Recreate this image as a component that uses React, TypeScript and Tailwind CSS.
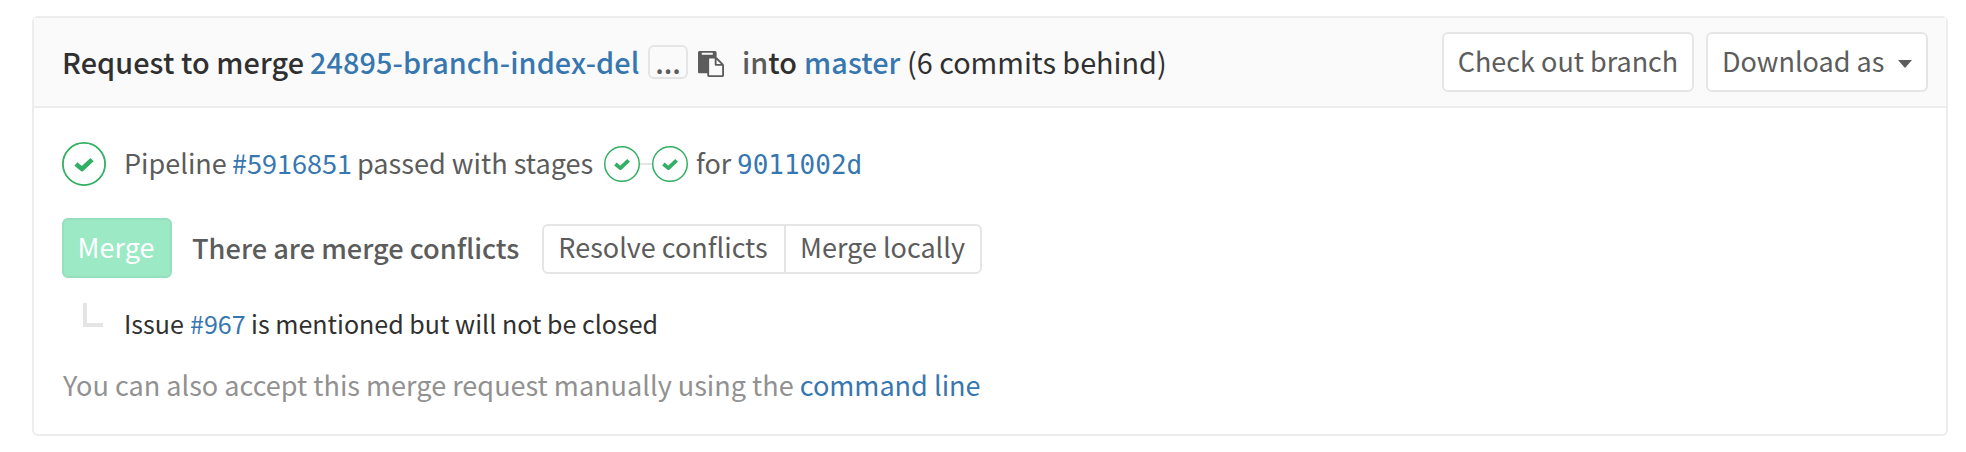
import React from 'react';

function CheckCircle({ className }: { className: string }) {
  return (
    <svg viewBox="0 0 44 44" className={`shrink-0 ${className}`} fill="none" stroke="#31af64">
      <circle cx="22" cy="22" r="21.1" strokeWidth="1.8" />
      <path d="M13.900 22 20 27 30 17.600" strokeWidth="4.600" strokeLinejoin="round" />
    </svg>
  );
}

export default function App() {
  return (
    <div className="h-[452px] w-[1966px] overflow-hidden bg-white pt-4 pl-8 font-['Noto_Sans_CJK_SC',sans-serif] text-[27px] leading-[30px] whitespace-nowrap text-[#5c5c5c]">
      <section className="h-[420px] w-[1916px] rounded-md border-2 border-[#ededed]">
        <header className="flex h-[90px] items-center justify-between border-b-2 border-[#ededed] bg-[#fafafa] pr-[18px] pl-7">
          <div className="flex items-center text-[28.8px] font-medium text-[#303030]">
            <span className="w-[248px] tracking-[0.09px]">Request to merge</span>
            <a className="w-[338px] tracking-[0.09px] text-[#3777b0]">24895-branch-index-del</a>
            <span className="flex h-[34px] w-10 items-center justify-center rounded-md border-2 border-[#e5e5e5] text-[#5c5c5c]">...</span>
            <svg viewBox="0 0 1792 1792" className="mt-1 ml-[10px] h-[26px] w-[26px]" fill="#5c5c5c">
              <path d="M768 1664h896v-640h-416q-40 0-68-28t-28-68v-416h-384v1152zm256-1440v-64q0-13-9.500-22.500t-22.500-9.500h-704q-13 0-22.500 9.500t-9.500 22.500v64q0 13 9.500 22.500t22.500 9.500h704q13 0 22.500-9.500t9.500-22.500zm256 672h299l-299-299v299zm512 128v672q0 40-28 68t-68 28h-960q-40 0-68-28t-28-68v-160h-544q-40 0-68-28t-28-68v-1344q0-40 28-68t68-28h1088q40 0 68 28t28 68v328q21 13 36 28l408 408q28 28 48 76t20 88z" />
            </svg>
            <span className="ml-[18px] w-[62px]"><span className="text-[#5c5c5c]">in</span>to</span>
            <a className="w-[103px] tracking-[0.09px] text-[#3777b0]">master</a>
            <span className="font-normal">(6 commits behind)</span>
          </div>
          <div className="flex gap-3">
            <button className="h-[60px] w-[252px] rounded-md border-2 border-[#e5e5e5] bg-white pb-0.5">Check out branch</button>
            <button className="flex h-[60px] w-[222px] items-center rounded-md border-2 border-[#e5e5e5] bg-white pl-[14px]">
              <span className="pb-0.5">Download as</span>
              <svg viewBox="0 0 14 8" className="mt-1 mr-[14px] ml-auto h-2 w-[14px]" fill="#5c5c5c"><path d="M0 0h14L7 8z" /></svg>
            </button>
          </div>
        </header>
        <div className="pl-7">
          <div className="mt-[34px] flex h-[44px] items-center">
            <CheckCircle className="h-11 w-11" />
            <span className="ml-[18px] w-[108px] pb-0.5">Pipeline</span>
            <a className="w-[125px] pb-0.5 text-[#3777b0]">#5916851</a>
            <span className="w-[247px] pb-0.5 text-[27.100px]">passed with stages</span>
            <CheckCircle className="h-9 w-9" />
            <span className="h-0.5 w-3 bg-[#e5e5e5]" />
            <CheckCircle className="h-9 w-9" />
            <span className="ml-2 w-[41px] pb-0.5">for</span>
            <a className="pt-0.5 font-['DejaVu_Sans_Mono',monospace] text-[26px] text-[#3777b0]">9011002d</a>
          </div>
          <div className="mt-8 flex h-[60px] items-center">
            <button className="h-[60px] w-[110px] rounded-md border-2 border-[#96dfbe] bg-[#9be9c5] pr-0.5 pb-0.5 text-white">Merge</button>
            <strong className="ml-5 w-[350px] pb-[3px] text-[27.2px] font-medium">There are merge conflicts</strong>
            <div className="mt-0.5 flex h-[50px] w-[440px] rounded-md border-2 border-[#e5e5e5]">
              <button className="w-[242px] border-r-2 border-[#e5e5e5] pr-0.5 pb-1">Resolve conflicts</button>
              <button className="flex-1 pr-px pb-1">Merge locally</button>
            </div>
          </div>
          <div className="mt-[30px] flex h-[30px] items-center text-[25.050px] text-[#303030]">
            <span className="mb-4 ml-[21px] h-6 w-5 border-b-4 border-l-4 border-[#e5e5e5]" />
            <span className="ml-[21px] w-[66px]">Issue</span>
            <a className="w-[61px] text-[#3777b0]">#967</a>
            <span>is mentioned but will not be closed</span>
          </div>
          <p className="mt-8 pl-px text-[27.050px] text-[#919191]">
            You can also accept this merge request manually using the <a className="text-[#3777b0]">command line</a>
          </p>
        </div>
      </section>
    </div>
  );
}
